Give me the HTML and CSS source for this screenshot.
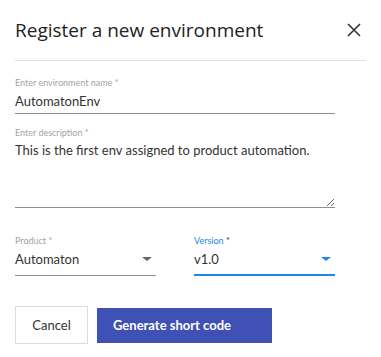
FILE: index.html
```html
<!DOCTYPE html>
<html lang="en">
<head>
  <meta charset="UTF-8" />
  <meta name="viewport" content="width=device-width, initial-scale=1.0"/>
  <title>Register a new environment</title>
  <link rel="stylesheet" href="styles.css">
</head>
<body>
  <div class="dialog" role="dialog" aria-labelledby="dialogTitle">
    <header class="dialog-header">
      <h2 id="dialogTitle">Register a new environment</h2>
      <button class="close-btn" aria-label="Close">
        <svg width="14" height="14" viewBox="0 0 14 14"><path d="M1 1L13 13M13 1L1 13" stroke="#333" stroke-width="1.6" fill="none"/></svg>
      </button>
    </header>

    <form class="dialog-body">
      <div class="field">
        <label for="envName">Enter environment name *</label>
        <input type="text" id="envName" value="AutomatonEnv" />
      </div>

      <div class="field">
        <label for="envDesc">Enter description *</label>
        <textarea id="envDesc">This is the first env assigned to product automation.</textarea>
      </div>

      <div class="field-row">
        <div class="field select-field">
          <label>Product *</label>
          <div class="select-box">
            <span>Automaton</span>
            <span class="caret"></span>
          </div>
        </div>
        <div class="field select-field focused">
          <label>Version <span class="req">*</span></label>
          <div class="select-box">
            <span>v1.0</span>
            <span class="caret"></span>
          </div>
        </div>
      </div>

      <div class="actions">
        <button type="button" class="btn btn-outline">Cancel</button>
        <button type="submit" class="btn btn-primary">Generate short code</button>
      </div>
    </form>
  </div>
</body>
</html>
```

FILE: styles.css
```css
:root {
  --primary-color: #3f51b5;
  --focus-color: #1e88e5;
  --text-color: #333333;
  --muted-color: #a3a3a3;
  --line-color: #8f8f8f;
  --divider-color: #e0e0e0;
}
body {
  margin: 0; font-family: 'Lato', 'Open Sans', sans-serif; background: #ffffff; color: var(--text-color);
}
.dialog { padding: 0 15px; width: 351px; }
.dialog-header {
  height: 60px; border-bottom: 1px solid var(--divider-color);
  display: flex; align-items: center; justify-content: space-between;
}
.dialog-header h2 { margin: 0; font-family: 'Open Sans', sans-serif; font-size: 19px; font-weight: 400; color: #222; }
.close-btn {
  width: 24px; height: 24px; padding: 0; border: none; background: none; cursor: pointer;
  display: flex; align-items: center; justify-content: center;
}
.dialog-body { width: 320px; padding-top: 16px; }
.field { display: flex; flex-direction: column; margin-bottom: 13px; }
.field label { font-size: 9px; line-height: 11px; color: var(--muted-color); }
.field input, .field textarea {
  font-family: inherit; font-size: 13px; line-height: 18px; color: var(--text-color);
  border: none; border-bottom: 1px solid var(--line-color); outline: none;
  padding: 4px 0 3px; margin: 0; background: none;
}
.field textarea { height: 70px; resize: vertical; box-sizing: border-box; padding-top: 3px; }
.field-row { display: flex; gap: 38px; margin-top: 27px; }
.select-field { width: 141px; }
.select-box {
  display: flex; align-items: center; justify-content: space-between;
  font-size: 13px; line-height: 18px; padding: 4px 0 7px; border-bottom: 1px solid var(--line-color);
}
.caret {
  width: 0; height: 0; margin-right: 4px;
  border-left: 5px solid transparent; border-right: 5px solid transparent; border-top: 4px solid #666;
}
.focused label { color: var(--focus-color); }
.focused label .req { color: var(--text-color); }
.focused .select-box { border-bottom: 2px solid var(--focus-color); padding-bottom: 6px; }
.focused .caret { border-top-color: var(--focus-color); }
.actions { display: flex; align-items: center; gap: 9px; margin-top: 17px; }
.btn {
  font-family: inherit; font-size: 13px; cursor: pointer; border-radius: 0;
}
.btn-outline {
  background: #fff; color: var(--text-color); border: 1px solid #dcdcdc;
  width: 73px; height: 38px;
}
.btn-primary {
  background: var(--primary-color); color: #fff; border: none;
  width: 175px; height: 35px; font-weight: 700; text-align: left; padding: 0 0 0 16px;
}
```
